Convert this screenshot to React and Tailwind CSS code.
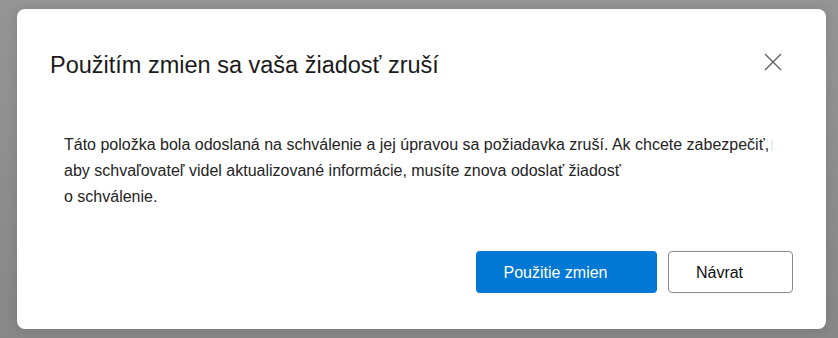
export default function App() {
  return (
    <div className="w-[838px] h-[338px] overflow-hidden bg-gradient-to-b from-[#959595] to-[#878787] pt-[9px] pl-[17px] font-['Liberation_Sans',Arial,sans-serif]">
      <div className="w-[809px] h-[320px] bg-white rounded-[8px] pt-[40px] pl-[33px] pr-[33px] shadow-[0_0_12px_rgba(0,0,0,0.12)]">
        <div className="flex justify-between items-start">
          <h2 className="text-[23.5px] leading-[32px] text-[#1a1a1a]">Použitím zmien sa vaša žiadosť zruší</h2>
          <button className="mt-[4px] mr-[11px] text-[#616161]" aria-label="Zavrieť">
            <svg width="18" height="18" viewBox="0 0 18 18" fill="none" stroke="currentColor" strokeWidth="1.4">
              <path d="M1 1 L17 17 M17 1 L1 17" />
            </svg>
          </button>
        </div>

        <p className="mt-[51px] ml-[14px] text-[16px] leading-[26px] text-[#242424]">
          Táto položka bola odoslaná na schválenie a jej úpravou sa požiadavka zruší. Ak chcete zabezpečiť,
          <span className="inline-block w-[2px] h-[11px] ml-[2px] bg-[#ececec] align-middle" />
          <br />
          aby schvaľovateľ videl aktualizované informácie, musíte znova odoslať žiadosť
          <br />
          o schválenie.
        </p>

        <div className="mt-[41px] flex justify-end gap-[11px]">
          <button className="w-[181px] h-[42px] rounded-[4px] bg-[#0078d4] text-white text-[16px] flex items-center justify-center pr-[22px] pt-[2px]">
            Použitie zmien
          </button>
          <button className="w-[125px] h-[42px] rounded-[4px] border border-[#8a8a8a] bg-white text-[#111] text-[16px] flex items-center justify-center pr-[22px] pt-[2px]">
            Návrat
          </button>
        </div>
      </div>
    </div>
  )
}
